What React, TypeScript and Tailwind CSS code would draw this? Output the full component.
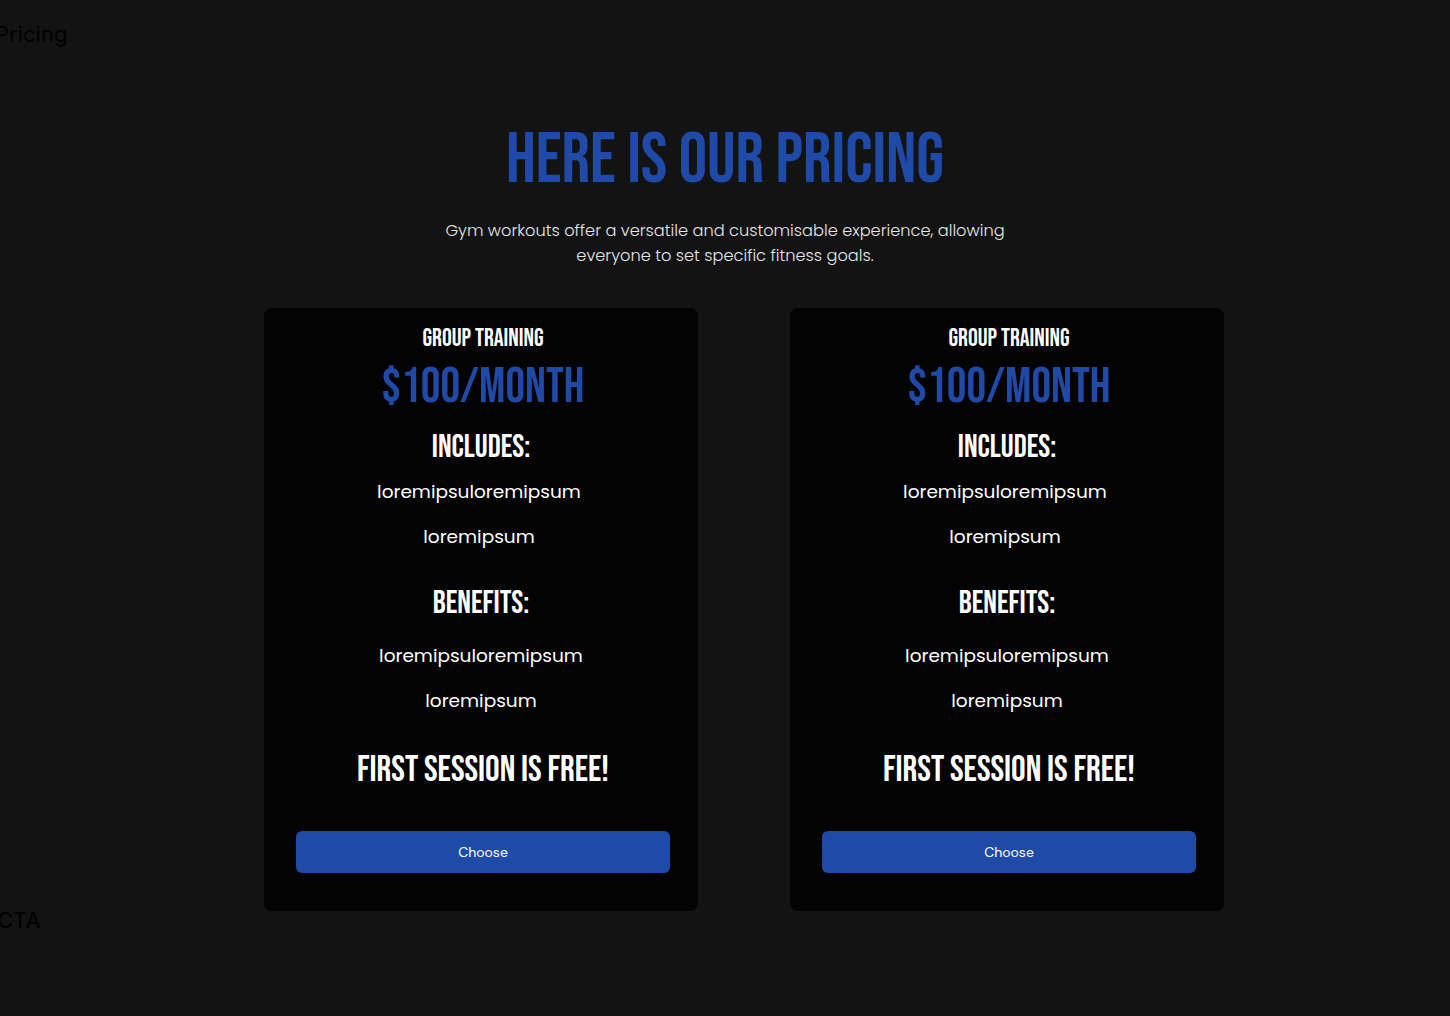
const display = "font-['Bebas_Neue','Liberation_Sans_Narrow','DejaVu_Sans_Condensed',sans-serif] font-normal uppercase";
const body = "font-['Poppins','Lato','Inter',sans-serif]";

function PlanCard() {
  return (
    <div className="w-[434px] h-[603px] rounded-lg bg-[#030303] pl-8 pr-7 pt-4 flex flex-col items-center text-white">
      <h3 className={`${display} text-[24.5px] leading-[30px]`}>Group Training</h3>
      <p className={`${display} text-[49px] leading-[50px] text-[#1f4aa8] mt-[9px]`}>$100/Month</p>
      <h4 className={`${display} text-[32px] leading-[40px] mt-[15px] pr-1`}>Includes:</h4>
      <ul className={`${body} text-[18.5px] leading-[45px] text-center mt-[1px] pr-2`}>
        <li>loremipsuloremipsum</li>
        <li>loremipsum</li>
      </ul>
      <h4 className={`${display} text-[32px] leading-[40px] mt-[25px] pr-1`}>Benefits:</h4>
      <ul className={`${body} text-[18.5px] leading-[45px] text-center mt-[9px] pr-1`}>
        <li>loremipsuloremipsum</li>
        <li>loremipsum</li>
      </ul>
      <p className={`${display} text-[36.5px] leading-[50px] mt-[22px]`}>First session is free!</p>
      <button className="mt-[36px] w-full h-[42px] rounded-md bg-[#1f4ba8] text-white text-[14px] font-['DM_Sans','Inter',sans-serif]">
        Choose
      </button>
    </div>
  );
}

export default function App() {
  return (
    <div className="min-h-[1016px] bg-[#131313] relative overflow-hidden">
      <p className="absolute left-[-5px] top-[18px] text-[22px] text-black font-['Inter',sans-serif]">Pricing</p>
      <section className="pt-[116px] flex flex-col items-center">
        <h1 className={`${display} text-[71px] leading-[90px] text-[#1f4aa8]`}>Here is our pricing</h1>
        <p className={`${body} font-light text-[16.2px] leading-[25px] text-[#e6e6e6] text-center w-[580px] mt-[12px]`}>
          Gym workouts offer a versatile and customisable experience, allowing everyone to set specific fitness goals.
        </p>
        <div className="flex gap-[92px] mt-[40px] pl-[38px]">
          <PlanCard />
          <PlanCard />
        </div>
      </section>
      <p className="absolute left-[-3px] top-[904px] text-[22px] text-black font-['Inter',sans-serif]">CTA</p>
    </div>
  );
}
